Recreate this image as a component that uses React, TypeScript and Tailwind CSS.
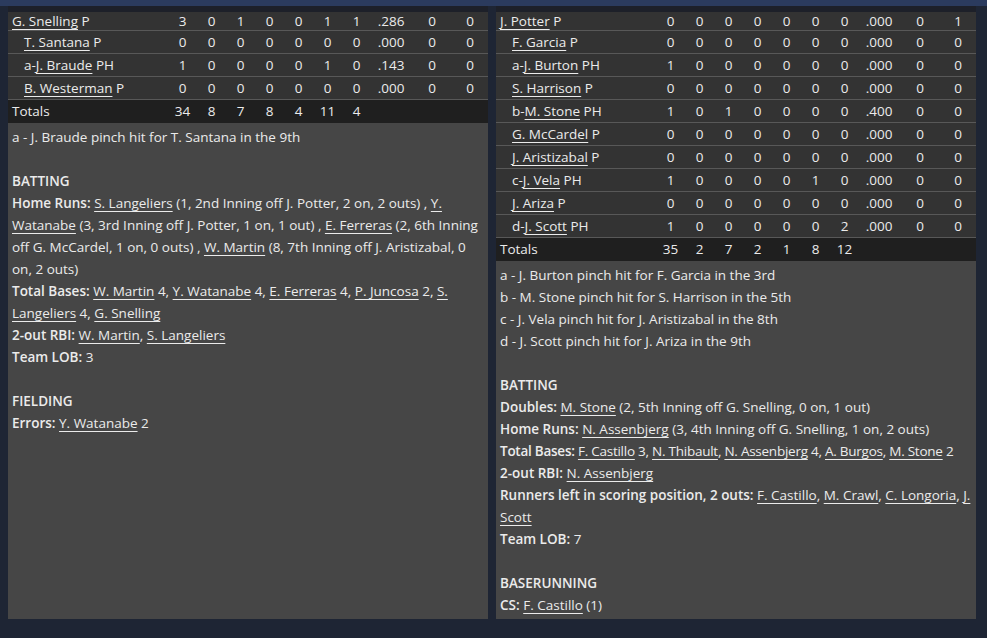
type Row = { pre?: string; name: string; pos: string; indent?: boolean; stats: string[] };

const homeRows: Row[] = [
  { name: 'G. Snelling', pos: 'P', stats: ['3', '0', '1', '0', '0', '1', '1', '.286', '0', '0'] },
  { name: 'T. Santana', pos: 'P', indent: true, stats: ['0', '0', '0', '0', '0', '0', '0', '.000', '0', '0'] },
  { pre: 'a-', name: 'J. Braude', pos: 'PH', indent: true, stats: ['1', '0', '0', '0', '0', '1', '0', '.143', '0', '0'] },
  { name: 'B. Westerman', pos: 'P', indent: true, stats: ['0', '0', '0', '0', '0', '0', '0', '.000', '0', '0'] },
];

const awayRows: Row[] = [
  { name: 'J. Potter', pos: 'P', stats: ['0', '0', '0', '0', '0', '0', '0', '.000', '0', '1'] },
  { name: 'F. Garcia', pos: 'P', indent: true, stats: ['0', '0', '0', '0', '0', '0', '0', '.000', '0', '0'] },
  { pre: 'a-', name: 'J. Burton', pos: 'PH', indent: true, stats: ['1', '0', '0', '0', '0', '0', '0', '.000', '0', '0'] },
  { name: 'S. Harrison', pos: 'P', indent: true, stats: ['0', '0', '0', '0', '0', '0', '0', '.000', '0', '0'] },
  { pre: 'b-', name: 'M. Stone', pos: 'PH', indent: true, stats: ['1', '0', '1', '0', '0', '0', '0', '.400', '0', '0'] },
  { name: 'G. McCardel', pos: 'P', indent: true, stats: ['0', '0', '0', '0', '0', '0', '0', '.000', '0', '0'] },
  { name: 'J. Aristizabal', pos: 'P', indent: true, stats: ['0', '0', '0', '0', '0', '0', '0', '.000', '0', '0'] },
  { pre: 'c-', name: 'J. Vela', pos: 'PH', indent: true, stats: ['1', '0', '0', '0', '0', '1', '0', '.000', '0', '0'] },
  { name: 'J. Ariza', pos: 'P', indent: true, stats: ['0', '0', '0', '0', '0', '0', '0', '.000', '0', '0'] },
  { pre: 'd-', name: 'J. Scott', pos: 'PH', indent: true, stats: ['1', '0', '0', '0', '0', '0', '2', '.000', '0', '0'] },
];

const colW = ['w-[29px]', 'w-[29px]', 'w-[29px]', 'w-[29px]', 'w-[29px]', 'w-[29px]', 'w-[29px]', 'w-[40px]', 'w-[42px]', 'w-[34px]'];

function L({ children }: { children: React.ReactNode }) {
  return <span className="underline underline-offset-[3px] decoration-1">{children}</span>;
}

function B({ children }: { children: React.ReactNode }) {
  return <span className="font-semibold">{children}</span>;
}

function StatRow({ row, first }: { row: Row; first?: boolean }) {
  return (
    <div className={`flex shrink-0 items-center border-b border-[#585858] bg-[#333333] ${first ? 'h-[19px]' : 'h-[23px]'}`}>
      <div className={`w-[160px] shrink-0 whitespace-nowrap ${row.indent ? 'pl-4' : 'pl-1'}`}>
        {row.pre}
        <L>{row.name}</L> {row.pos}
      </div>
      {row.stats.map((s, i) => (
        <div key={i} className={`${colW[i]} shrink-0 text-center`}>
          {s}
        </div>
      ))}
    </div>
  );
}

function Totals({ stats }: { stats: string[] }) {
  return (
    <div className="flex h-[23px] shrink-0 items-center bg-[#1f1f1f]">
      <div className="w-[160px] shrink-0 pl-1">Totals</div>
      {stats.map((s, i) => (
        <div key={i} className="w-[29px] shrink-0 text-center">
          {s}
        </div>
      ))}
    </div>
  );
}

function Panel({ rows, totals, children }: { rows: Row[]; totals: string[]; children: React.ReactNode }) {
  return (
    <div className="flex w-[480px] shrink-0 flex-col">
      <div className="h-[6px] shrink-0 bg-[#1d2029]" />
      {rows.map((r, i) => (
        <StatRow key={i} row={r} first={i === 0} />
      ))}
      <Totals stats={totals} />
      <div className="flex-1 bg-[#464646] px-1 pt-[3px] leading-[22px]">{children}</div>
    </div>
  );
}

export default function App() {
  return (
    <div
      className="flex h-[638px] w-[987px] flex-col overflow-hidden bg-[#1e2534] text-[13.5px] text-[#ebebeb]"
      style={{ fontFamily: '"Open Sans", Lato, sans-serif' }}
    >
      <div className="h-[6px] shrink-0 bg-[#2b3b5e]" />
      <div className="flex h-[613px] shrink-0 gap-2 pl-2">
        <Panel rows={homeRows} totals={['34', '8', '7', '8', '4', '11', '4']}>
          <div>a - J. Braude pinch hit for T. Santana in the 9th</div>
          <div className="h-[22px]" />
          <div><B>BATTING</B></div>
          <div>
            <B>Home Runs:</B> <L>S. Langeliers</L> (1, 2nd Inning off J. Potter, 2 on, 2 outs) , <L>Y. Watanabe</L> (3, 3rd Inning off J. Potter, 1 on, 1 out) , <L>E. Ferreras</L> (2, 6th Inning off G. McCardel, 1 on, 0 outs) , <L>W. Martin</L> (8, 7th Inning off J. Aristizabal, 0 on, 2 outs)
          </div>
          <div>
            <B>Total Bases:</B> <L>W. Martin</L> 4, <L>Y. Watanabe</L> 4, <L>E. Ferreras</L> 4, <L>P. Juncosa</L> 2, <L>S. Langeliers</L> 4, <L>G. Snelling</L>
          </div>
          <div>
            <B>2-out RBI:</B> <L>W. Martin</L>, <L>S. Langeliers</L>
          </div>
          <div>
            <B>Team LOB:</B> 3
          </div>
          <div className="h-[22px]" />
          <div><B>FIELDING</B></div>
          <div>
            <B>Errors:</B> <L>Y. Watanabe</L> 2
          </div>
        </Panel>
        <Panel rows={awayRows} totals={['35', '2', '7', '2', '1', '8', '12']}>
          <div>a - J. Burton pinch hit for F. Garcia in the 3rd</div>
          <div>b - M. Stone pinch hit for S. Harrison in the 5th</div>
          <div>c - J. Vela pinch hit for J. Aristizabal in the 8th</div>
          <div>d - J. Scott pinch hit for J. Ariza in the 9th</div>
          <div className="h-[22px]" />
          <div><B>BATTING</B></div>
          <div>
            <B>Doubles:</B> <L>M. Stone</L> (2, 5th Inning off G. Snelling, 0 on, 1 out)
          </div>
          <div>
            <B>Home Runs:</B> <L>N. Assenbjerg</L> (3, 4th Inning off G. Snelling, 1 on, 2 outs)
          </div>
          <div className="tracking-[-0.25px]">
            <B>Total Bases:</B> <L>F. Castillo</L> 3, <L>N. Thibault</L>, <L>N. Assenbjerg</L> 4, <L>A. Burgos</L>, <L>M. Stone</L> 2
          </div>
          <div>
            <B>2-out RBI:</B> <L>N. Assenbjerg</L>
          </div>
          <div>
            <B>Runners left in scoring position, 2 outs:</B> <L>F. Castillo</L>, <L>M. Crawl</L>, <L>C. Longoria</L>, <L>J. Scott</L>
          </div>
          <div>
            <B>Team LOB:</B> 7
          </div>
          <div className="h-[22px]" />
          <div><B>BASERUNNING</B></div>
          <div>
            <B>CS:</B> <L>F. Castillo</L> (1)
          </div>
        </Panel>
      </div>
    </div>
  );
}
